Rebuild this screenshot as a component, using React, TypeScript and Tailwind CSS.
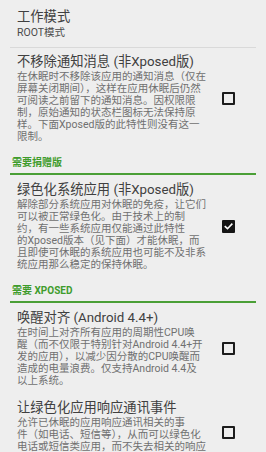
import React from "react";

const FONT = { fontFamily: "Roboto, 'Noto Sans CJK SC', sans-serif" };

function Checkbox({ checked }: { checked: boolean }) {
  if (checked) {
    return (
      <div className="w-[13px] h-[13px] bg-[#151515] rounded-[1px] flex items-center justify-center">
        <svg width="9" height="9" viewBox="0 0 9 9">
          <path d="M1.3 4.6 L3.5 6.7 L7.8 2.2" stroke="#ffffff" strokeWidth="1.6" fill="none" strokeLinecap="square" />
        </svg>
      </div>
    );
  }
  return <div className="w-[13px] h-[13px] border-2 border-[#1c1c1c] rounded-[1px]" />;
}

function Item({
  title,
  lines,
  checked,
  pt,
  pb,
}: {
  title: string;
  lines: string[];
  checked?: boolean;
  pt: string;
  pb: string;
}) {
  return (
    <div className={`flex items-center pl-[7px] pr-[21px] ${pt} ${pb}`}>
      <div className="flex-1 flex flex-col">
        <div className="text-[13.3px] leading-[18px] text-[#404040] whitespace-nowrap">{title}</div>
        <div className="flex flex-col text-[10.5px] leading-[12px] text-[#707070]">
          {lines.map((l, i) => (
            <div key={i} className="whitespace-nowrap">
              {l}
            </div>
          ))}
        </div>
      </div>
      {checked !== undefined && <Checkbox checked={checked} />}
    </div>
  );
}

function Section({ label }: { label: string }) {
  return (
    <div className="flex flex-col">
      <div className="h-[24px] pt-[7px] pl-[2px] text-[10px] leading-[14px] font-bold text-[#3f9c2c]">{label}</div>
      <div className="h-[2px] bg-[#4a9f36]" />
    </div>
  );
}

export default function App() {
  return (
    <div className="w-[266px] h-[452px] overflow-hidden bg-[#eeeeee] px-[10px]" style={FONT}>
      <div className="flex flex-col">
        <div className="pl-[7px] pt-[8px] pb-[8px] flex flex-col">
          <div className="text-[13.3px] leading-[18px] text-[#404040]">工作模式</div>
          <div className="mt-[1px] text-[10.5px] leading-[12px] text-[#4a4a4a]">ROOT模式</div>
        </div>
        <div className="h-[1px] bg-[#d9d9d9]" />
        <Item
          pt="pt-[5px]"
          pb="pb-[6px]"
          title="不移除通知消息 (非Xposed版)"
          checked={false}
          lines={[
            "在休眠时不移除该应用的通知消息（仅在",
            "屏幕关闭期间），这样在应用休眠后仍然",
            "可阅读之前留下的通知消息。因权限限",
            "制，原始通知的状态栏图标无法保持原",
            "样。下面Xposed版的此特性则没有这一",
            "限制。",
          ]}
        />
        <Section label="需要捐赠版" />
        <Item
          pt="pt-[6px]"
          pb="pb-[6px]"
          title="绿色化系统应用 (非Xposed版)"
          checked={true}
          lines={[
            "解除部分系统应用对休眠的免疫，让它们",
            "可以被正常绿色化。由于技术上的制",
            "约，有一些系统应用仅能通过此特性",
            "的Xposed版本（见下面）才能休眠，而",
            "且即使可休眠的系统应用也可能不及非系",
            "统应用那么稳定的保持休眠。",
          ]}
        />
        <Section label="需要 XPOSED" />
        <Item
          pt="pt-[6px]"
          pb="pb-[6px]"
          title="唤醒对齐 (Android 4.4+)"
          checked={false}
          lines={[
            "在时间上对齐所有应用的周期性CPU唤",
            "醒（而不仅限于特别针对Android 4.4+开",
            "发的应用），以减少因分散的CPU唤醒而",
            "造成的电量浪费。仅支持Android 4.4及",
            "以上系统。",
          ]}
        />
        <Item
          pt="pt-[6px]"
          pb="pb-[6px]"
          title="让绿色化应用响应通讯事件"
          checked={false}
          lines={[
            "允许已休眠的应用响应通讯相关的事",
            "件（如电话、短信等），从而可以绿色化",
            "电话或短信类应用，而不失去相关的响应",
            "功能。",
          ]}
        />
      </div>
    </div>
  );
}
